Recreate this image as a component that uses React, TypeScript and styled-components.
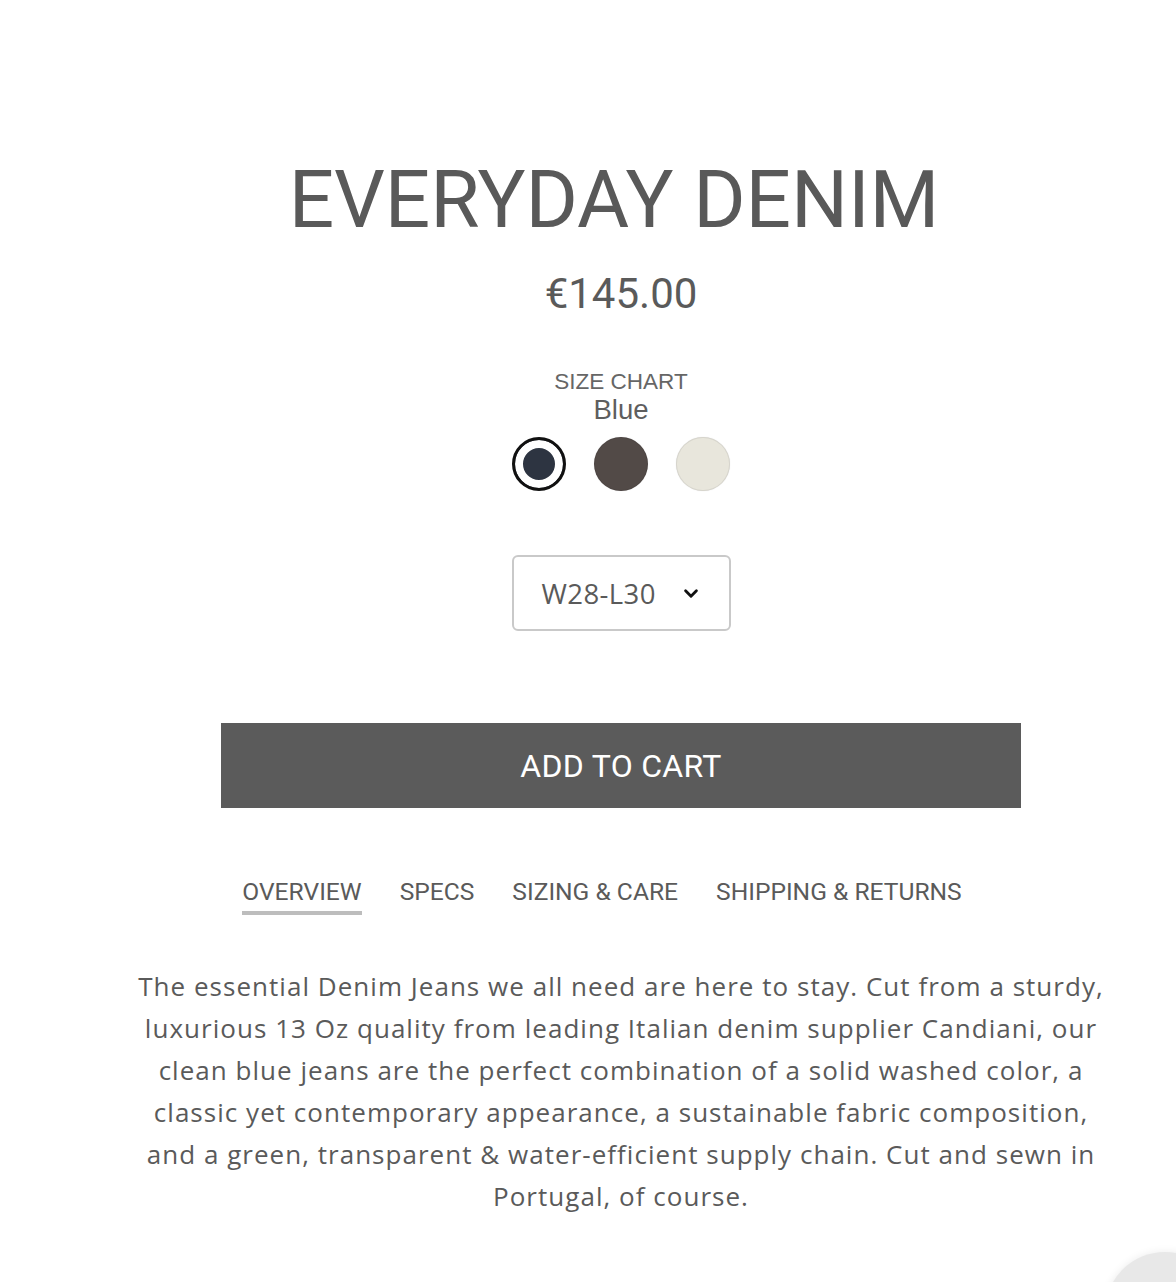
import React from "react";
import styled, { createGlobalStyle } from "styled-components";

const Global = createGlobalStyle`
  html, body { margin: 0; padding: 0; background: #fff; }
  body { font-family: "Open Sans", "Liberation Sans", sans-serif; color: #5a5a5a; }
  * { box-sizing: border-box; }
`;

const Page = styled.div`
  position: relative;
  width: 1176px;
  height: 1282px;
  overflow: hidden;
  background: #fff;
`;

const Column = styled.main`
  width: 1000px;
  margin-left: 121px;
  padding-top: 160px;
  display: flex;
  flex-direction: column;
  align-items: center;
`;

const Title = styled.h1`
  margin: 0;
  font-family: Roboto, "Liberation Sans", sans-serif;
  font-weight: 400;
  font-size: 80px;
  line-height: 80px;
  letter-spacing: -0.1px;
  padding-right: 14px;
  color: #595959;
`;

const Price = styled.div`
  margin-top: 30px;
  font-family: Roboto, "Liberation Sans", sans-serif;
  font-size: 42px;
  line-height: 48px;
  color: #5a5a5a;
`;

const SizeChart = styled.a`
  margin-top: 52px;
  font-family: "Liberation Sans", Arial, sans-serif;
  font-size: 22.5px;
  line-height: 24px;
  color: #666;
  text-decoration: none;
`;

const ColorName = styled.div`
  margin-top: 1px;
  font-family: "Liberation Sans", Arial, sans-serif;
  font-size: 27.5px;
  line-height: 30px;
  color: #5e5e5e;
`;

const Swatches = styled.div`
  margin-top: 12px;
  display: flex;
  gap: 28px;
`;

const Swatch = styled.button<{ $color: string; $selected?: boolean }>`
  width: 54px;
  height: 54px;
  border-radius: 50%;
  padding: 0;
  cursor: pointer;
  background: ${(p) => p.$color};
  border: ${(p) => (p.$selected ? "3px solid #111" : "1px solid rgba(0,0,0,0.07)")};
  box-shadow: ${(p) => (p.$selected ? "inset 0 0 0 8px #fff" : "0 0 1px rgba(0,0,0,0.15)")};
`;

const Select = styled.div`
  margin-top: 64px;
  width: 219px;
  height: 76px;
  border: 2px solid #c9c9c9;
  border-radius: 6px;
  display: flex;
  align-items: center;
  padding-left: 28px;
  gap: 22px;
  font-family: "Open Sans", "Liberation Sans", sans-serif;
  font-size: 27.5px;
  letter-spacing: 0.4px;
  color: #5a5a5a;
`;

const AddToCart = styled.button`
  margin-top: 92px;
  width: 800px;
  height: 85px;
  border: none;
  background: #5b5b5b;
  color: #fff;
  font-family: Roboto, "Liberation Sans", sans-serif;
  font-size: 32px;
  letter-spacing: 0.3px;
  cursor: pointer;
`;

const Tabs = styled.nav`
  margin-top: 70px;
  display: flex;
`;

const Tab = styled.span<{ $active?: boolean }>`
  margin-right: 38px;
  font-family: Roboto, "Liberation Sans", sans-serif;
  font-size: 24.6px;
  line-height: 28px;
  padding-bottom: 5px;
  color: #5a5a5a;
  border-bottom: 4px solid ${(p) => (p.$active ? "#bdbdbd" : "transparent")};
`;

const Description = styled.p`
  margin: 50px 0 0;
  max-width: 972px;
  text-align: center;
  font-family: "Open Sans", "Liberation Sans", sans-serif;
  font-size: 26px;
  letter-spacing: 1.03px;
  line-height: 42px;
  color: #5a5a5a;
`;

const ChatBubble = styled.div`
  position: absolute;
  left: 1105px;
  top: 1252px;
  width: 120px;
  height: 120px;
  border-radius: 50%;
  background: #e8e8e8;
  box-shadow: 0 0 8px rgba(0, 0, 0, 0.08);
`;

export default function App() {
  return (
    <Page>
      <Global />
      <Column>
        <Title>EVERYDAY DENIM</Title>
        <Price>€145.00</Price>
        <SizeChart href="#">SIZE CHART</SizeChart>
        <ColorName>Blue</ColorName>
        <Swatches>
          <Swatch $color="#2d3441" $selected aria-label="Blue" />
          <Swatch $color="#524a47" aria-label="Brown" />
          <Swatch $color="#e8e6dc" aria-label="Ecru" />
        </Swatches>
        <Select>
          <span>W28-L30</span>
          <svg width="26" height="26" viewBox="0 0 24 24" fill="none" stroke="#111" strokeWidth="2.6" strokeLinecap="round" strokeLinejoin="round">
            <path d="M7 10l5 5 5-5" />
          </svg>
        </Select>
        <AddToCart>ADD TO CART</AddToCart>
        <Tabs>
          <Tab $active>OVERVIEW</Tab>
          <Tab>SPECS</Tab>
          <Tab>SIZING &amp; CARE</Tab>
          <Tab>SHIPPING &amp; RETURNS</Tab>
        </Tabs>
        <Description>
          The essential Denim Jeans we all need are here to stay. Cut from a sturdy, luxurious 13 Oz quality from leading Italian denim supplier Candiani, our clean blue jeans are the perfect combination of a solid washed color, a classic yet contemporary appearance, a sustainable fabric composition, and a green, transparent &amp; water-efficient supply chain. Cut and sewn in Portugal, of course.
        </Description>
      </Column>
      <ChatBubble />
    </Page>
  );
}
